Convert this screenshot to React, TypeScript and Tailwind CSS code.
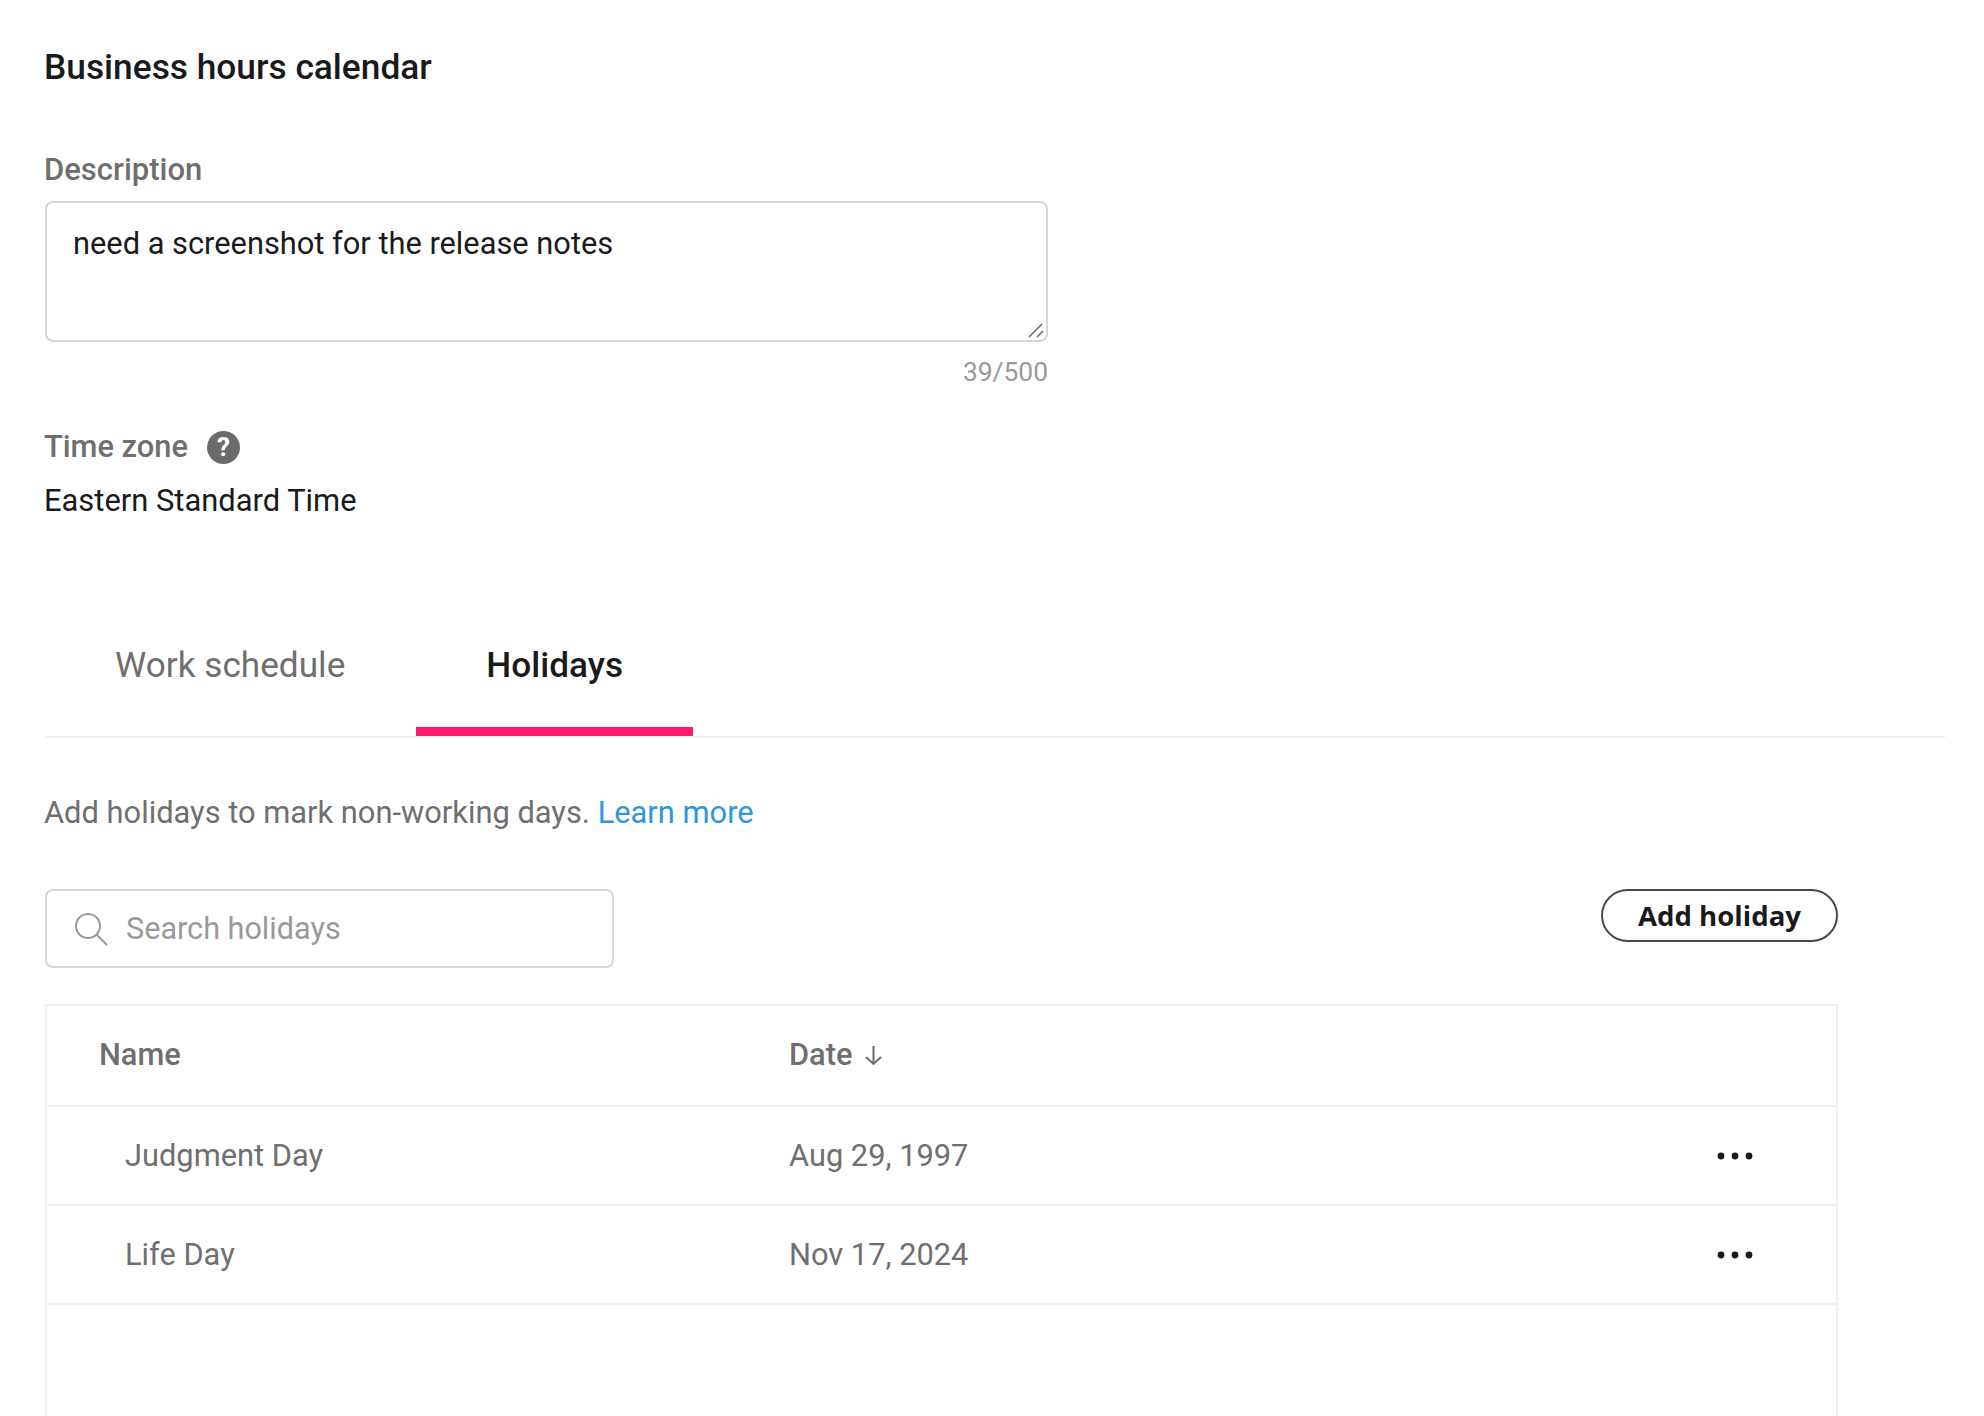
export default function App() {
  const rows = [
    ["Judgment Day", "Aug 29, 1997"],
    ["Life Day", "Nov 17, 2024"],
  ];
  return (
    <div className="h-[1416px] overflow-hidden bg-white pl-[45px] pr-[39px] pt-[46px] font-['Roboto',sans-serif] text-[#6f6f6f]">
      <h1 className="-ml-[1px] h-[42px] text-[35.3px] leading-[42px] font-medium text-[#1a1a1a]">Business hours calendar</h1>
      <div className="-ml-[1px] mt-[64px] h-[36px] text-[31px] leading-[36px] font-medium">Description</div>
      <div className="mt-[13px] h-[141px] w-[1003px] rounded-[8px] border-2 border-[#d6d6d6] bg-white">
        <div className="relative h-full px-[26px] pt-[21px] text-[30.8px] leading-[40px] text-[#1a1a1a]">
          need a screenshot for the release notes
          <svg className="absolute right-0 bottom-0" width="20" height="20" viewBox="0 0 20 20" fill="none" stroke="#6b6b6b" strokeWidth="1.6">
            <path d="M3 17L16 4" />
            <path d="M11 17L17 11" />
          </svg>
        </div>
      </div>
      <div className="mt-[14px] h-[32px] w-[1003px] text-right text-[26.4px] leading-[32px] text-[#999999]">39/500</div>
      <div className="-ml-[1px] mt-[41px] flex h-[36px] items-center gap-[19px] text-[30.8px] leading-[36px] font-medium">
        <span>Time zone</span>
        <span className="flex h-[33px] w-[33px] items-center justify-center rounded-full bg-[#6b6b6b] text-[26px] leading-none font-bold text-white">?</span>
      </div>
      <div className="-ml-[1px] mt-[16px] h-[40px] text-[30.9px] leading-[40px] text-[#1a1a1a]">Eastern Standard Time</div>
      <div className="mt-[93px] flex h-[124px] border-b-2 border-[#eeeeee] text-[35.2px] leading-[44px]">
        <div className="flex h-[122px] items-start pl-[70px] pr-[71px] pt-[29px]">Work schedule</div>
        <div className="flex h-[122px] items-start border-b-[9px] border-[#ff1a6c] px-[70px] pt-[29px] font-medium text-[#1a1a1a]">Holidays</div>
      </div>
      <div className="-ml-[1px] mt-[55px] h-[40px] text-[30.85px] leading-[40px]">
        Add holidays to mark non-working days. <span className="text-[#2e96dc]">Learn more</span>
      </div>
      <div className="mt-[56px] flex w-[1793px] items-start justify-between">
        <div className="flex h-[79px] w-[569px] items-center gap-[18px] rounded-[8px] border-2 border-[#d6d6d6] px-[27px] text-[30.6px] text-[#999999]">
          <svg width="34" height="34" viewBox="0 0 34 34" fill="none" stroke="#999999" strokeWidth="2">
            <circle cx="14" cy="14" r="12" />
            <path d="M22.5 22.5L33 33" />
          </svg>
          <span>Search holidays</span>
        </div>
        <button className="flex h-[53px] w-[237px] items-center justify-center rounded-full border-2 border-[#4a4a4a] bg-white font-['Open_Sans',sans-serif] text-[27.6px] leading-none font-bold text-[#1a1a1a]">
          Add holiday
        </button>
      </div>
      <div className="mt-[36px] h-[420px] w-[1793px] border-x-2 border-t-2 border-[#f0f0f0]">
        <div className="flex h-[101px] items-center border-b-2 border-[#f0f0f0] text-[30.8px] font-medium">
          <div className="w-[742px] pl-[52px]">Name</div>
          <div className="flex items-center gap-[12px]">
            <span>Date</span>
            <svg width="19" height="21" viewBox="0 0 19 21" fill="none" stroke="#6b6b6b" strokeWidth="2">
              <path d="M9.5 1V19" />
              <path d="M2 12L9.5 19L17 12" />
            </svg>
          </div>
        </div>
        {rows.map(([name, date]) => (
          <div key={name} className="flex h-[99px] items-center border-b-2 border-[#f0f0f0] text-[30.8px]">
            <div className="w-[742px] pl-[78px] pt-[2px]">{name}</div>
            <div className="flex-1 pt-[2px]">{date}</div>
            <svg className="mr-[83px]" width="36" height="8" viewBox="0 0 36 8" fill="#1a1a1a">
              <circle cx="4" cy="4" r="3.4" />
              <circle cx="18" cy="4" r="3.4" />
              <circle cx="32" cy="4" r="3.4" />
            </svg>
          </div>
        ))}
      </div>
    </div>
  );
}
